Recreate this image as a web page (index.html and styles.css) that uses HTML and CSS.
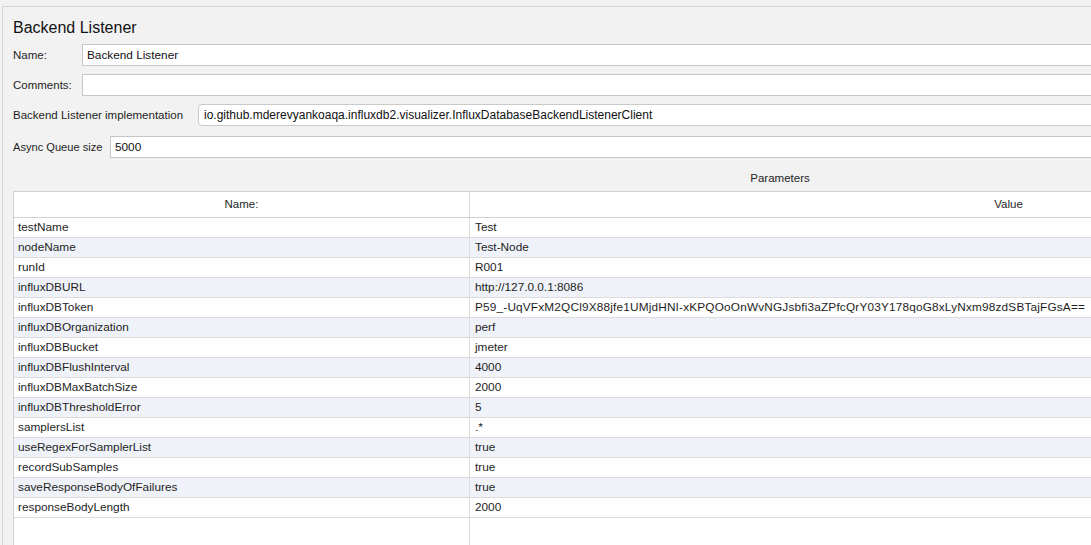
FILE: index.html
```html
<!DOCTYPE html>
<html>
<head>
<meta charset="utf-8">
<title>Backend Listener</title>
<link rel="stylesheet" href="styles.css">
</head>
<body>
<div class="frame">
  <div class="title">Backend Listener</div>
  <div class="fields">
    <div class="field">
      <label class="lbl lbl-short">Name:</label>
      <div class="input">Backend Listener</div>
    </div>
    <div class="field">
      <label class="lbl lbl-short">Comments:</label>
      <div class="input"></div>
    </div>
    <div class="field">
      <label class="lbl lbl-impl">Backend Listener implementation</label>
      <div class="input combo">io.github.mderevyankoaqa.influxdb2.visualizer.InfluxDatabaseBackendListenerClient</div>
    </div>
    <div class="field field-async">
      <label class="lbl lbl-async">Async Queue size</label>
      <div class="input">5000</div>
    </div>
  </div>
  <div class="params">
    <div class="caption">Parameters</div>
    <div class="table">
      <div class="row head">
        <div class="cell c-name">Name:</div>
        <div class="cell c-value">Value</div>
      </div>
      <div class="row"><div class="cell c-name">testName</div><div class="cell c-value">Test</div></div>
      <div class="row alt"><div class="cell c-name">nodeName</div><div class="cell c-value">Test-Node</div></div>
      <div class="row"><div class="cell c-name">runId</div><div class="cell c-value">R001</div></div>
      <div class="row alt"><div class="cell c-name">influxDBURL</div><div class="cell c-value">http://127.0.0.1:8086</div></div>
      <div class="row"><div class="cell c-name">influxDBToken</div><div class="cell c-value token">P59_-UqVFxM2QCl9X88jfe1UMjdHNI-xKPQOoOnWvNGJsbfi3aZPfcQrY03Y178qoG8xLyNxm98zdSBTajFGsA==</div></div>
      <div class="row alt"><div class="cell c-name">influxDBOrganization</div><div class="cell c-value">perf</div></div>
      <div class="row"><div class="cell c-name">influxDBBucket</div><div class="cell c-value">jmeter</div></div>
      <div class="row alt"><div class="cell c-name">influxDBFlushInterval</div><div class="cell c-value">4000</div></div>
      <div class="row"><div class="cell c-name">influxDBMaxBatchSize</div><div class="cell c-value">2000</div></div>
      <div class="row alt"><div class="cell c-name">influxDBThresholdError</div><div class="cell c-value">5</div></div>
      <div class="row"><div class="cell c-name">samplersList</div><div class="cell c-value">.*</div></div>
      <div class="row alt"><div class="cell c-name">useRegexForSamplerList</div><div class="cell c-value">true</div></div>
      <div class="row"><div class="cell c-name">recordSubSamples</div><div class="cell c-value">true</div></div>
      <div class="row alt"><div class="cell c-name">saveResponseBodyOfFailures</div><div class="cell c-value">true</div></div>
      <div class="row"><div class="cell c-name">responseBodyLength</div><div class="cell c-value">2000</div></div>
      <div class="row filler"><div class="cell c-name"></div><div class="cell c-value"></div></div>
    </div>
  </div>
</div>
</body>
</html>
```
FILE: styles.css
```css
html, body {
  margin: 0;
  padding: 0;
  height: 100%;
  overflow: hidden;
}
body {
  background: #f2f2f2;
  font-family: "Liberation Sans", Arial, Helvetica, sans-serif;
  color: #1e1e1e;
  font-size: 11.5px;
}
.frame {
  margin-top: 6px;
  margin-left: 2px;
  border-top: 1px solid #d4d4d4;
  border-left: 1px solid #d4d4d4;
  height: calc(100% - 7px);
  padding-left: 10px;
  display: flex;
  flex-direction: column;
}
.title {
  margin-top: 11px;
  height: 20px;
  line-height: 20px;
  font-size: 16px;
  color: #111;
}
.fields {
  margin-top: 6px;
  display: flex;
  flex-direction: column;
  gap: 8px;
}
.field {
  display: flex;
  align-items: center;
  height: 22px;
}
.field-async {
  margin-top: 2px;
}
.lbl {
  flex: none;
  white-space: nowrap;
}
.lbl-short { width: 69px; }
.lbl-impl { width: 185px; }
.lbl-async { width: 97px; font-size: 11.1px; }
.input {
  flex: 1;
  height: 20px;
  line-height: 20px;
  margin-right: -20px;
  background: #fff;
  border: 1px solid #c6c6c6;
  padding-left: 4px;
  white-space: nowrap;
  overflow: hidden;
  color: #111;
  font-size: 11.8px;
}
.combo {
  border-radius: 4px;
  border-color: #c9c9c9;
  padding-left: 5px;
  font-size: 12px;
}
.params {
  flex: 1;
  display: flex;
  flex-direction: column;
  width: 1534px;
}
.caption {
  height: 33px;
  box-sizing: border-box;
  padding-top: 13px;
  line-height: 14px;
  text-align: center;
  font-size: 11.5px;
}
.table {
  flex: 1;
  display: flex;
  flex-direction: column;
  background: #fff;
  border-top: 1px solid #d0d0d0;
  border-left: 1px solid #d0d0d0;
  font-size: 11.8px;
}
.row {
  display: flex;
  height: 19px;
  border-bottom: 1px solid #dcdcdc;
}
.row.alt {
  background: #eff3f9;
}
.row.head {
  height: 25px;
  border-bottom-color: #d0d0d0;
  font-size: 11.5px;
}
.row.filler {
  flex: 1;
  border-bottom: none;
}
.cell {
  box-sizing: border-box;
  line-height: 19px;
  padding-left: 4px;
  white-space: nowrap;
  overflow: hidden;
}
.c-name {
  width: 456px;
  flex: none;
  border-right: 1px solid #dcdcdc;
}
.c-value {
  flex: 1;
  padding-left: 5px;
}
.c-value.token {
  letter-spacing: 0.18px;
}
.head .cell {
  line-height: 25px;
  text-align: center;
  padding-left: 0;
}
```
